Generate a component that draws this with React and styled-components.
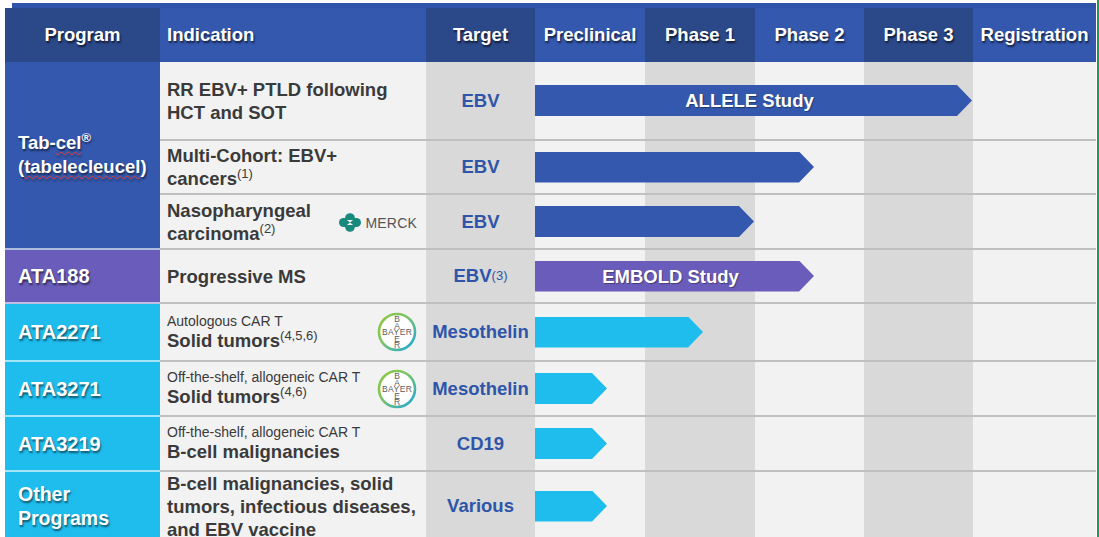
import React from 'react';
import styled, { createGlobalStyle } from 'styled-components';

const BLUE = '#3458ae';
const BLUE_DARK = '#2b4889';
const PURPLE = '#6a5cba';
const CYAN = '#1ebdee';
const LIGHT = '#f2f2f2';
const GREY = '#d9d9d9';
const LINE = '#c0c0c0';

const GlobalStyle = createGlobalStyle`
  html, body {
    margin: 0;
    padding: 0;
    background: #fff;
  }
  body {
    font-family: "Liberation Sans", Arial, sans-serif;
    overflow: hidden;
  }
`;

const Page = styled.div`
  width: 1099px;
  height: 537px;
  box-sizing: border-box;
  padding: 3px 1px 0 5px;
  border-right: 2px solid #12a052;
  overflow: hidden;
`;

const TopStrip = styled.div`
  height: 5px;
  margin-left: 7px;
  background: #2f53a8;
`;

const Table = styled.div`
  display: grid;
  grid-template-columns: 155px 266px 109px 110px 110px 109px 109px 123px;
  grid-template-rows: 54px 79px 54px 55px 54px 58px 55px 55px 70px;
`;

const HeaderCell = styled.div`
  display: flex;
  align-items: center;
  justify-content: ${(p) => (p.$left ? 'flex-start' : 'center')};
  padding-left: ${(p) => (p.$left ? '7px' : '0')};
  background: ${(p) => (p.$dark ? BLUE_DARK : BLUE)};
  color: #fff;
  font-size: 18.5px;
  font-weight: 700;
  white-space: nowrap;
  text-shadow: 1px 2px 2px rgba(0, 0, 0, 0.65);
`;

const ProgramCell = styled.div`
  grid-column: 1;
  grid-row: span ${(p) => p.$span};
  box-sizing: border-box;
  display: flex;
  flex-direction: column;
  justify-content: center;
  padding-left: 13px;
  background: ${(p) => p.$color};
  border-bottom: 2px solid rgba(255, 255, 255, 0.6);
  color: #fff;
  font-weight: 700;
  font-size: ${(p) => p.$size}px;
  line-height: 24px;
  white-space: nowrap;
  text-shadow: 1px 2px 2px rgba(0, 0, 0, 0.55);
`;

const Misspelled = styled.span`
  text-decoration-line: underline;
  text-decoration-style: wavy;
  text-decoration-color: #e0393e;
  text-decoration-thickness: 1px;
  text-underline-offset: 2px;
`;

const Reg = styled.span`
  font-size: 13px;
  vertical-align: 7px;
  line-height: 0;
`;

const IndicationCell = styled.div`
  grid-column: 2;
  box-sizing: border-box;
  display: flex;
  align-items: center;
  justify-content: space-between;
  padding: 0 9px 0 7px;
  background: ${LIGHT};
  border-bottom: 2px solid ${LINE};
`;

const IndicationText = styled.div`
  color: #3a3a3a;
  font-size: 18.5px;
  font-weight: 700;
  line-height: 23px;
  white-space: nowrap;
`;

const Note = styled.span`
  display: block;
  font-size: 14px;
  font-weight: 400;
  line-height: 16px;
`;

const Sup = styled.span`
  font-size: 13px;
  font-weight: 400;
  vertical-align: 7px;
  line-height: 0;
`;

const TargetCell = styled.div`
  grid-column: 3;
  box-sizing: border-box;
  display: flex;
  align-items: center;
  justify-content: center;
  background: ${GREY};
  border-bottom: 2px solid ${LINE};
  color: #2f55a9;
  font-size: 18.5px;
  font-weight: 700;
  white-space: nowrap;
`;

const StageTrack = styled.div`
  grid-column: 4 / -1;
  box-sizing: border-box;
  display: grid;
  grid-template-columns: 110px 110px 109px 109px 123px;
  border-bottom: 2px solid ${(p) => (p.$last ? 'transparent' : LINE)};
`;

const Stripe = styled.div`
  grid-row: 1;
  grid-column: ${(p) => p.$col};
  background: ${(p) => (p.$dark ? GREY : LIGHT)};
`;

const Arrow = styled.div`
  grid-row: 1;
  grid-column: 1 / -1;
  align-self: center;
  justify-self: start;
  z-index: 1;
  height: 31px;
  box-sizing: border-box;
  padding-right: 8px;
  background: ${(p) => p.$color};
  clip-path: polygon(0 0, calc(100% - 15px) 0, 100% 50%, calc(100% - 15px) 100%, 0 100%);
  color: #fff;
  font-size: 18.5px;
  font-weight: 700;
  line-height: 31px;
  text-align: center;
  white-space: nowrap;
  text-shadow: 1px 1px 1px rgba(0, 0, 0, 0.35);
`;

const MerckMark = styled.div`
  display: flex;
  align-items: center;
  gap: 4px;
  margin-top: 2px;
  color: #555;
  font-size: 14px;
  letter-spacing: 0.2px;
`;

const MerckIcon = () => (
  <svg width="22" height="19" viewBox="0 0 24 20">
    <g fill="#17897d">
      <circle cx="5" cy="10" r="5" />
      <circle cx="19" cy="10" r="5" />
      <ellipse cx="12" cy="4.6" rx="5.2" ry="4.6" />
      <ellipse cx="12" cy="15.4" rx="5.2" ry="4.6" />
      <rect x="6" y="5" width="12" height="10" />
    </g>
    <polygon points="8.6,7.2 15.4,7.2 12,10 15.4,12.8 8.6,12.8 12,10" fill="#f2f2f2" />
  </svg>
);

const Merck = () => (
  <MerckMark>
    <MerckIcon />
    <span>MERCK</span>
  </MerckMark>
);

const BayerText = styled.text`
  font-family: "Liberation Sans", Arial, sans-serif;
  font-size: 8.5px;
  fill: #5d5d5d;
`;

const Bayer = ({ id }) => (
  <svg width="40" height="40" viewBox="0 0 40 40">
    <defs>
      <linearGradient id={id} x1="0" y1="0" x2="1" y2="1">
        <stop offset="0" stopColor="#8dc63f" />
        <stop offset="0.45" stopColor="#7cc46a" />
        <stop offset="1" stopColor="#1aa6e0" />
      </linearGradient>
    </defs>
    <circle cx="20" cy="20" r="18" fill="#fff" stroke={`url(#${id})`} strokeWidth="2.6" />
    <BayerText x="20" y="23.2" textAnchor="middle" textLength="30">BAYER</BayerText>
    <BayerText x="20" y="10" textAnchor="middle">B</BayerText>
    <BayerText x="20" y="16.6" textAnchor="middle">A</BayerText>
    <BayerText x="20" y="29.8" textAnchor="middle">E</BayerText>
    <BayerText x="20" y="36.2" textAnchor="middle">R</BayerText>
  </svg>
);

const headers = [
  { label: 'Program', dark: true },
  { label: 'Indication', left: true },
  { label: 'Target', dark: true },
  { label: 'Preclinical' },
  { label: 'Phase 1', dark: true },
  { label: 'Phase 2' },
  { label: 'Phase 3', dark: true },
  { label: 'Registration' },
];

const stripes = [false, true, false, true, false];

const rows = [
  {
    program: {
      span: 3,
      color: BLUE,
      size: 18.5,
      label: (
        <>
          <span>
            Tab-<Misspelled>cel</Misspelled>
            <Reg>®</Reg>
          </span>
          <span>
            (<Misspelled>tabelecleucel</Misspelled>)
          </span>
        </>
      ),
    },
    indication: (
      <>
        RR EBV+ PTLD following
        <br />
        HCT and SOT
      </>
    ),
    target: 'EBV',
    arrow: { width: 437, color: BLUE, label: 'ALLELE Study' },
  },
  {
    indication: (
      <>
        Multi-Cohort: EBV+
        <br />
        cancers<Sup>(1)</Sup>
      </>
    ),
    target: 'EBV',
    arrow: { width: 279, color: BLUE },
  },
  {
    indication: (
      <>
        Nasopharyngeal
        <br />
        carcinoma<Sup>(2)</Sup>
      </>
    ),
    logo: <Merck />,
    target: 'EBV',
    arrow: { width: 219, color: BLUE },
  },
  {
    program: { span: 1, color: PURPLE, size: 20, label: 'ATA188' },
    indication: 'Progressive MS',
    target: (
      <>
        EBV<Sup>(3)</Sup>
      </>
    ),
    arrow: { width: 279, color: PURPLE, label: 'EMBOLD Study' },
  },
  {
    program: { span: 1, color: CYAN, size: 20, label: 'ATA2271' },
    indication: (
      <>
        <Note>Autologous CAR T</Note>
        Solid tumors<Sup>(4,5,6)</Sup>
      </>
    ),
    logo: <Bayer id="bayer-a" />,
    target: 'Mesothelin',
    arrow: { width: 168, color: CYAN },
  },
  {
    program: { span: 1, color: CYAN, size: 20, label: 'ATA3271' },
    indication: (
      <>
        <Note>Off-the-shelf, allogeneic CAR T</Note>
        Solid tumors<Sup>(4,6)</Sup>
      </>
    ),
    logo: <Bayer id="bayer-b" />,
    target: 'Mesothelin',
    arrow: { width: 72, color: CYAN },
  },
  {
    program: { span: 1, color: CYAN, size: 20, label: 'ATA3219' },
    indication: (
      <>
        <Note>Off-the-shelf, allogeneic CAR T</Note>
        B-cell malignancies
      </>
    ),
    target: 'CD19',
    arrow: { width: 72, color: CYAN },
  },
  {
    program: {
      span: 1,
      color: CYAN,
      size: 19.5,
      label: (
        <>
          <span>Other</span>
          <span>Programs</span>
        </>
      ),
    },
    indication: (
      <>
        B-cell malignancies, solid
        <br />
        tumors, infectious diseases,
        <br />
        and EBV vaccine
      </>
    ),
    target: 'Various',
    arrow: { width: 72, color: CYAN },
    last: true,
  },
];

export default function App() {
  return (
    <>
      <GlobalStyle />
      <Page>
        <TopStrip />
        <Table>
          {headers.map((h) => (
            <HeaderCell key={h.label} $dark={h.dark} $left={h.left}>
              {h.label}
            </HeaderCell>
          ))}
          {rows.map((row, i) => (
            <React.Fragment key={i}>
              {row.program && (
                <ProgramCell
                  $span={row.program.span}
                  $color={row.program.color}
                  $size={row.program.size}
                >
                  {row.program.label}
                </ProgramCell>
              )}
              <IndicationCell>
                <IndicationText>{row.indication}</IndicationText>
                {row.logo}
              </IndicationCell>
              <TargetCell>{row.target}</TargetCell>
              <StageTrack $last={row.last}>
                {stripes.map((dark, j) => (
                  <Stripe key={j} $col={j + 1} $dark={dark} />
                ))}
                <Arrow $color={row.arrow.color} style={{ width: row.arrow.width }}>
                  {row.arrow.label}
                </Arrow>
              </StageTrack>
            </React.Fragment>
          ))}
        </Table>
      </Page>
    </>
  );
}
